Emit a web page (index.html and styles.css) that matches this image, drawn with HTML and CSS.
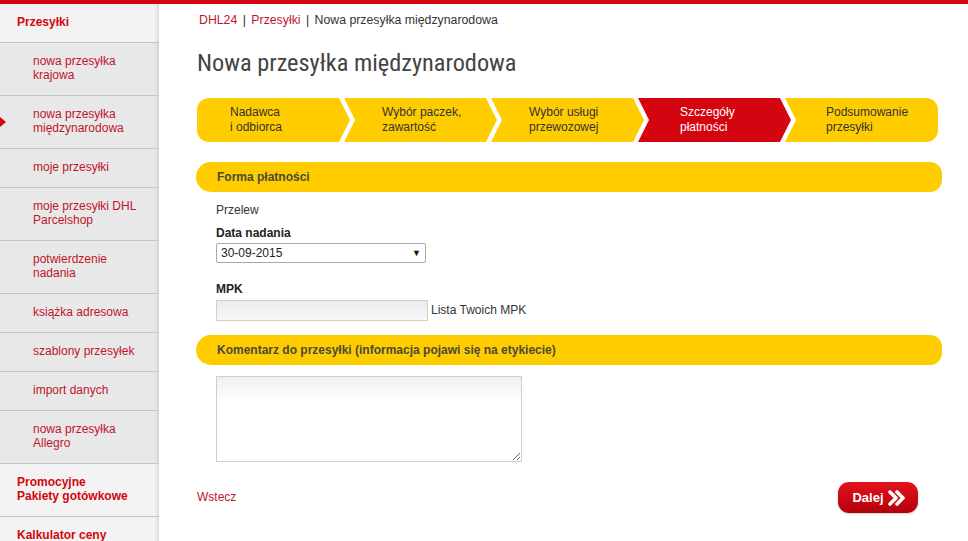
FILE: index.html
```html
<!DOCTYPE html>
<html lang="pl">
<head>
    <meta charset="UTF-8">
    <title>Nowa przesyłka międzynarodowa - DHL24</title>
    <link rel="stylesheet" href="styles.css">
</head>
<body>
    <div class="topbar"></div>
    <div class="layout">
        <aside class="sidebar">
            <ul class="menu">
                <li class="menu-main"><a href="#">Przesyłki</a></li>
                <li class="menu-sub"><a href="#">nowa przesyłka<br>krajowa</a></li>
                <li class="menu-sub active"><a href="#">nowa przesyłka<br>międzynarodowa</a></li>
                <li class="menu-sub"><a href="#">moje przesyłki</a></li>
                <li class="menu-sub"><a href="#">moje przesyłki DHL<br>Parcelshop</a></li>
                <li class="menu-sub"><a href="#">potwierdzenie<br>nadania</a></li>
                <li class="menu-sub"><a href="#">książka adresowa</a></li>
                <li class="menu-sub"><a href="#">szablony przesyłek</a></li>
                <li class="menu-sub"><a href="#">import danych</a></li>
                <li class="menu-sub"><a href="#">nowa przesyłka<br>Allegro</a></li>
                <li class="menu-main"><a href="#">Promocyjne<br>Pakiety gotówkowe</a></li>
                <li class="menu-main"><a href="#">Kalkulator ceny</a></li>
            </ul>
        </aside>

        <main class="content">
            <div class="breadcrumb">
                <a href="#">DHL24</a> <span class="sep">|</span> <a href="#">Przesyłki</a> <span class="sep">|</span> Nowa przesyłka międzynarodowa
            </div>
            <h1>Nowa przesyłka międzynarodowa</h1>

            <ol class="steps">
                <li class="step first">Nadawca<br>i odbiorca</li>
                <li class="step">Wybór paczek,<br>zawartość</li>
                <li class="step">Wybór usługi<br>przewozowej</li>
                <li class="step current">Szczegóły<br>płatności</li>
                <li class="step last">Podsumowanie<br>przesyłki</li>
            </ol>

            <section class="panel">
                <h2 class="panel-title">Forma płatności</h2>
                <div class="panel-body">
                    <p class="plain">Przelew</p>
                    <label class="field-label" for="date">Data nadania</label>
                    <div class="select-wrap">
                        <select id="date">
                            <option>30-09-2015</option>
                        </select>
                    </div>

                    <label class="field-label mpk-label" for="mpk">MPK</label>
                    <div class="mpk-row">
                        <input type="text" id="mpk">
                        <a href="#" class="mpk-link">Lista Twoich MPK</a>
                    </div>
                </div>
            </section>

            <section class="panel comment">
                <h2 class="panel-title">Komentarz do przesyłki (informacja pojawi się na etykiecie)</h2>
                <div class="panel-body">
                    <textarea></textarea>
                </div>
            </section>

            <div class="actions">
                <a href="#" class="back">Wstecz</a>
                <button type="button" class="next">
                    Dalej
                    <svg width="18" height="16" viewBox="0 0 18 16">
                        <polyline points="2,2 8,8 2,14" fill="none" stroke="#fff" stroke-width="3.6" stroke-linecap="round" stroke-linejoin="round"/>
                        <polyline points="9,2 15,8 9,14" fill="none" stroke="#fff" stroke-width="3.6" stroke-linecap="round" stroke-linejoin="round"/>
                    </svg>
                </button>
            </div>
        </main>
    </div>
</body>
</html>
```

FILE: styles.css
```css
body {
    margin: 0;
    font-family: 'Liberation Sans', Arial, sans-serif;
    font-size: 12px;
    line-height: 15px;
    color: #333;
    background-color: #fff;
}

a {
    text-decoration: none;
}

.topbar {
    height: 4px;
    background-color: #d40511;
}

.layout {
    display: flex;
    align-items: flex-start;
}

/* sidebar */

.sidebar {
    width: 159px;
    flex-shrink: 0;
    min-height: 537px;
    background-color: #e8e8e8;
    box-shadow: inset -4px 0 4px -3px rgba(0, 0, 0, 0.15);
}

.menu {
    list-style: none;
    margin: 0;
    padding: 0;
}

.menu li {
    position: relative;
    border-bottom: 1px solid #c6c6c6;
}

.menu li a {
    display: block;
    padding: 11px 8px 13px 33px;
    line-height: 14px;
    color: #c0142c;
}

.menu-main {
    background-color: #f3f3f3;
    box-shadow: inset -4px 0 4px -3px rgba(0, 0, 0, 0.15);
}

.menu .menu-main a {
    padding-left: 17px;
    font-weight: bold;
    color: #d40511;
}

.menu .active::before {
    content: "";
    position: absolute;
    left: 0;
    top: 21px;
    border-top: 5px solid transparent;
    border-bottom: 5px solid transparent;
    border-left: 6px solid #d40511;
}

/* content */

.content {
    width: 745px;
    padding: 9px 0 0 38px;
}

.breadcrumb {
    padding-left: 2px;
    color: #333;
    font-size: 12.3px;
}

.breadcrumb a {
    color: #c0142c;
}

.breadcrumb .sep {
    margin: 0 2px;
}

h1 {
    margin: 20px 0 20px;
    font-family: 'Liberation Sans Narrow', 'Roboto Condensed', Roboto, sans-serif;
    font-size: 24.3px;
    line-height: 30px;
    font-weight: normal;
    color: #444;
}

.steps {
    display: flex;
    list-style: none;
    margin: 0;
    padding: 0;
    width: 740px;
}

.step {
    width: 153px;
    height: 44px;
    flex-shrink: 0;
    box-sizing: border-box;
    padding: 7px 0 0 38px;
    margin-left: -6px;
    background-color: #ffcc00;
    color: #333;
    font-size: 12px;
    line-height: 15px;
    clip-path: polygon(0 0, calc(100% - 11px) 0, 100% 50%, calc(100% - 11px) 100%, 0 100%, 11px 50%);
}

.step.first {
    margin-left: 0;
    padding-left: 33px;
    border-radius: 12px 0 0 12px;
    clip-path: polygon(0 0, calc(100% - 11px) 0, 100% 50%, calc(100% - 11px) 100%, 0 100%);
}

.step.current {
    padding-left: 42px;
    background-color: #d40511;
    color: #fff;
}

.step.last {
    padding-left: 41px;
    border-radius: 0 12px 12px 0;
    clip-path: polygon(0 0, 100% 0, 100% 100%, 0 100%, 11px 50%);
}

.panel {
    margin-top: 20px;
}

.panel.comment {
    margin-top: 14px;
}

.panel-title {
    margin: 0 0 0 -1px;
    height: 30px;
    padding-left: 21px;
    line-height: 30px;
    font-size: 12px;
    font-weight: bold;
    color: #4a4a3a;
    background-color: #ffcc00;
    border-radius: 15px 12px 12px 15px;
}

.panel-body {
    padding-left: 19px;
}

.plain {
    margin: 11px 0 8px;
}

.field-label {
    display: block;
    font-weight: bold;
    color: #222;
}

.select-wrap {
    position: relative;
    width: 210px;
    margin-top: 2px;
}

.select-wrap::after {
    content: "▼";
    position: absolute;
    right: 5px;
    top: 4px;
    font-size: 9px;
    line-height: 12px;
    color: #111;
    pointer-events: none;
}

select {
    -webkit-appearance: none;
    appearance: none;
    width: 210px;
    height: 20px;
    padding: 0 4px;
    border: 1px solid #a9a9a9;
    border-radius: 2px;
    background-color: #fff;
    font-family: 'Liberation Sans', Arial, sans-serif;
    font-size: 12px;
    color: #222;
}

.mpk-label {
    margin-top: 19px;
}

.mpk-row {
    display: flex;
    align-items: center;
    margin-top: 3px;
}

.mpk-row input {
    width: 212px;
    height: 21px;
    box-sizing: border-box;
    border: 1px solid #cfcfcf;
    background: linear-gradient(#ececec, #f7f7f7);
    margin: 0;
}

.mpk-link {
    margin-left: 3px;
    color: #333;
}

textarea {
    display: block;
    margin-top: 11px;
    width: 306px;
    height: 86px;
    box-sizing: border-box;
    border: 1px solid #cfcfcf;
    background: linear-gradient(#efefef, #fff 25px);
    resize: both;
}

.actions {
    display: flex;
    justify-content: space-between;
    align-items: center;
    margin-top: 20px;
    padding-right: 24px;
}

.back {
    color: #c0142c;
}

.next {
    display: flex;
    align-items: center;
    justify-content: center;
    gap: 4px;
    width: 80px;
    height: 31px;
    padding: 0 0 0 2px;
    border: none;
    border-radius: 11px;
    background: linear-gradient(#e3131b, #b3000c);
    color: #fff;
    font-family: 'Liberation Sans', Arial, sans-serif;
    font-size: 13px;
    font-weight: bold;
    cursor: pointer;
    box-shadow: 0 1px 2px rgba(0, 0, 0, 0.2);
}
```
